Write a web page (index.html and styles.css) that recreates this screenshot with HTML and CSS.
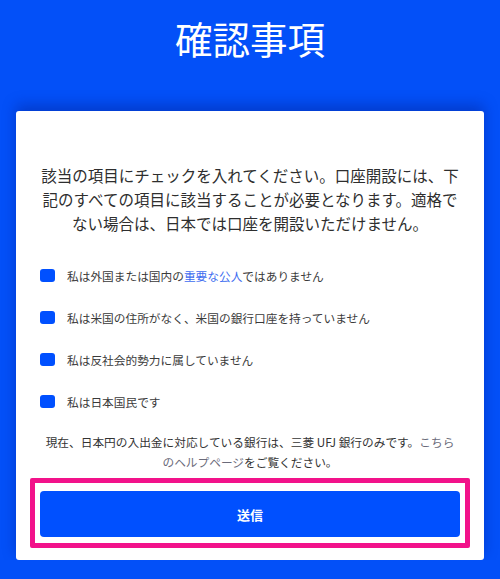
FILE: index.html
```html
<!DOCTYPE html>
<html lang="ja">

<head>
  <meta charset="UTF-8">
  <meta name="viewport" content="width=device-width, initial-scale=1.0">
  <title>確認事項</title>
  <link rel="stylesheet" href="styles.css">
</head>

<body>

  <h1 class="page-title">確認事項</h1>

  <div class="card">
    <p class="intro">該当の項目にチェックを入れてください。口座開設には、下記のすべての項目に該当することが必要となります。適格でない場合は、日本では口座を開設いただけません。</p>

    <ul class="checks">
      <li><label><input type="checkbox"><span>私は外国または国内の<a href="#" class="link">重要な公人</a>ではありません</span></label></li>
      <li><label><input type="checkbox"><span>私は米国の住所がなく、米国の銀行口座を持っていません</span></label></li>
      <li><label><input type="checkbox"><span>私は反社会的勢力に属していません</span></label></li>
      <li><label><input type="checkbox"><span>私は日本国民です</span></label></li>
    </ul>

    <p class="note">現在、日本円の入出金に対応している銀行は、三菱 UFJ 銀行のみです。<a href="#" class="help">こちらのヘルプページ</a>をご覧ください。</p>

    <div class="highlight">
      <button type="submit" class="btn-send">送信</button>
    </div>
  </div>

</body>

</html>
```

FILE: styles.css
```css
body {
  margin: 0;
  background: #0350f8;
  font-family: "Noto Sans CJK JP", "Noto Sans", sans-serif;
  color: #333;
}

.page-title {
  margin: 0;
  padding-top: 12px;
  font-size: 37.5px;
  font-weight: 400;
  line-height: 52px;
  color: #fff;
  text-align: center;
}

.card {
  margin: 47px 16px 0;
  padding: 52px 24px 12px;
  background: #fff;
  border-radius: 3px;
  box-shadow: 0 -6px 14px rgba(0, 20, 120, 0.35);
}

.intro {
  margin: 0;
  font-size: 15.5px;
  line-height: 24px;
  text-align: center;
  color: #2e2e2e;
}

.checks {
  list-style: none;
  margin: 19px 0 0;
  padding: 0;
}

.checks li {
  height: 42px;
  display: flex;
  align-items: center;
}

.checks label {
  display: flex;
  align-items: center;
  gap: 12px;
  font-size: 11.7px;
  color: #3a3a3a;
}

.checks input {
  appearance: none;
  margin: 0;
  width: 15px;
  height: 13px;
  border-radius: 3px;
  background: #0050ff;
}

.link {
  color: #3d6cf0;
  text-decoration: none;
}

.note {
  margin: 10px 0 0;
  font-size: 11.7px;
  line-height: 20px;
  text-align: center;
  color: #333;
}

.help {
  color: #6a6a7a;
  text-decoration: none;
}

.highlight {
  margin: 6px -10px 0;
  padding: 8px 5px 6px;
  border: 5px solid #f2128a;
  border-radius: 2px;
}

.btn-send {
  display: block;
  width: 100%;
  height: 46px;
  border: none;
  border-radius: 4px;
  background: #0050ff;
  color: #fff;
  font-family: inherit;
  font-size: 13px;
  font-weight: 700;
}
```
